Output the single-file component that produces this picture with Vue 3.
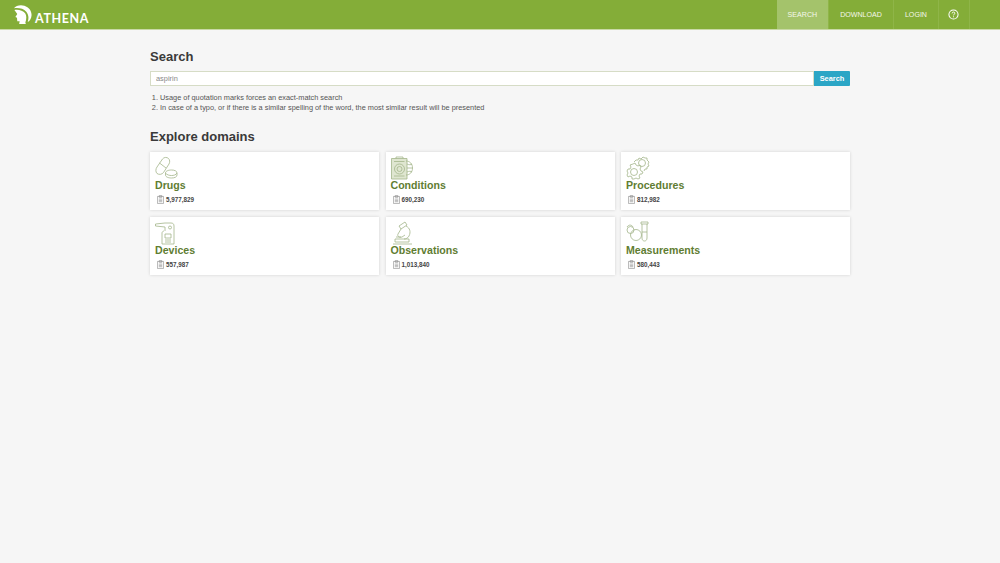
<template>
  <div class="page">
    <header class="topbar">
      <a class="logo">
        <svg class="helmet" viewBox="0 0 20 20">
          <path d="M1 3.500 C3 0.500 8 -0.500 12 0.800 C17 2.500 19.800 6.500 19.500 11 C19.300 14 18 16.500 15.500 18 C16.800 14 16.500 10 14 7 C11 3.800 6 2.800 1 3.500 Z" fill="#fff" />
          <path d="M1.500 5.200 C6 4.500 10.500 5.800 12.800 8.800 C14.500 11.500 14.300 15 13 18.500 L13.500 20 L6.500 20 L7 17 L4.500 17 L4.200 13.500 L2.500 12.500 L4.500 9.500 Z" fill="#fff" />
        </svg>
        <span>ATHENA</span>
      </a>
      <nav class="nav">
        <a class="nav-item active">SEARCH</a>
        <a class="nav-item">DOWNLOAD</a>
        <a class="nav-item">LOGIN</a>
        <a class="nav-item help">
          <svg viewBox="0 0 12 12" width="11" height="11" fill="none" stroke="#fff">
            <circle cx="6" cy="6" r="5" stroke-width="1.100" />
            <path d="M4.500 4.800 C4.500 3.800 5.200 3.300 6 3.300 C6.900 3.300 7.500 3.900 7.500 4.600 C7.500 5.600 6 5.700 6 7" stroke-width="1" />
            <path d="M6 8 V9" stroke-width="1.100" />
          </svg>
        </a>
      </nav>
    </header>

    <main class="content">
      <h2 class="title">Search</h2>
      <form class="search" @submit.prevent>
        <input class="search-input" type="text" v-model="query" />
        <button class="search-btn">Search</button>
      </form>
      <ol class="tips">
        <li>Usage of quotation marks forces an exact-match search</li>
        <li>In case of a typo, or if there is a similar spelling of the word, the most similar result will be presented</li>
      </ol>

      <h2 class="title explore">Explore domains</h2>
      <div class="domains">
        <div class="card" v-for="d in domains" :key="d.name">
          <svg class="card-icon" viewBox="0 0 24 24" width="24" height="24" fill="none" stroke="#a3b58a" stroke-width="0.800">
            <path v-if="d.tint" :d="d.tint" fill="#dfe6d0" />
            <path v-for="(p, i) in d.paths" :key="i" :d="p" />
            <circle v-for="(c, i) in d.circles" :key="'c' + i" :cx="c[0]" :cy="c[1]" :r="c[2]" />
          </svg>
          <div class="card-name">{{ d.name }}</div>
          <div class="card-count">
            <svg viewBox="0 0 8 10" width="7" height="9" fill="none" stroke="#888" stroke-width="0.700">
              <path d="M0.500 1.500 H7.500 V9.500 H0.500 Z M2.500 0.500 H5.500 V2.500 H2.500 Z M2 4.500 H6 M2 6 H6 M2 7.500 H6" />
            </svg>
            <span>{{ d.count }}</span>
          </div>
        </div>
      </div>
    </main>
  </div>
</template>

<script setup>
import { ref } from 'vue'

const query = ref('aspirin')

const domains = [
  {
    name: 'Drugs',
    count: '5,977,829',
    paths: [
      'M2 11 L7.500 3 C9 1 12 1 13.500 2.500 C15 4 15 6 14 8 L8.500 16.500 C7 18.500 4 19 2 17.500 C0.500 16 0.500 13 2 11 Z',
      'M4.500 7 L11 12',
      'M10.500 17 C10.500 15 13.500 14 16.500 14 C19.500 14 22 15 22 17 V19 C22 21 19.500 22 16.500 22 C13.500 22 10.500 21 10.500 19 Z',
      'M10.500 17 C12 19 14.500 19.500 16.500 19.500 C18.500 19.500 21 19 22 17'
    ],
    circles: []
  },
  {
    name: 'Conditions',
    count: '690,230',
    tint: 'M0.500 2.500 H16 V23 H0.500 Z',
    paths: [
      'M5 2.500 V1 H12 V2.500',
      'M3 5.500 H13.500 M3 20 H13.500',
      'M15 5 C19 5 21.500 8 21.500 12 C21.500 16 19 19 15 19',
      'M16 12 H21.500 M16 8 C18 9 20 9 21 8 M16 16 C18 15 20 15 21 16'
    ],
    circles: [[8.500, 13, 5], [8.500, 13, 2.500]]
  },
  {
    name: 'Procedures',
    count: '812,982',
    paths: [
      'M7 8 L9 7 L10 9 L12 10 L14 9 L15 11 L14 13 L15 15 L17 16 L16 18 L14 18 L13 20 L14 22 L12 23 L10 22 L8 23 L6 23 L6 21 L4 20 L2 21 L1 19 L2 17 L1 15 L2 13 L4 13 L5 11 L4 9 Z',
      'M8 6 L10 4 L12 4 L13 2 L15 3 L17 1 L19 2 L21 2 L21 4 L23 6 L22 8 L23 10 L21 11 L21 13 L19 13 L18 15'
    ],
    circles: [[8, 16, 3.500], [16, 7, 3.500]]
  },
  {
    name: 'Devices',
    count: '557,987',
    paths: [
      'M0.500 3 L10 2 H16 C18 2 19 3 19 5 V23 H7 V12 C7 11 8 10 9 10',
      'M0.500 3 V5 L10 6 V10',
      'M10 13 H16 V17 H10 Z',
      'M10 19 H16 M10 21 H16'
    ],
    circles: [[15, 6.500, 1.500]]
  },
  {
    name: 'Observations',
    count: '1,013,840',
    paths: [
      'M8 5 L14 1 L16 4 L10 8 Z',
      'M10 8 L7 13 C6 15 8 17 11 16 L14 14',
      'M15 5 C19 7 20 11 18 15 C17 17 15 18 13 18',
      'M4 18 H18 V21 H4 Z',
      'M2 23 H21',
      'M5 16 H10'
    ],
    circles: []
  },
  {
    name: 'Measurements',
    count: '580,443',
    paths: [
      'M1 6 C3 3 6 4 7 6',
      'M15 1 H22 V3 H15 Z',
      'M16 3 V17 C16 19 17.200 20 18.500 20 C19.800 20 21 19 21 17 V3',
      'M16 11 H21'
    ],
    circles: [[4.500, 9, 3.500], [10, 14, 5.500]]
  }
]
</script>

<style>
html,
body {
  margin: 0;
  background: #f6f6f6;
}
</style>

<style scoped>
.page {
  min-height: 563px;
  background: #f6f6f6;
  font-family: "Liberation Sans", Arial, sans-serif;
  color: #333;
}

.topbar {
  display: flex;
  justify-content: space-between;
  height: 29px;
  background: #84ad38;
  border-bottom: 1px solid #c9d9a6;
}

.logo {
  display: flex;
  align-items: flex-end;
  gap: 3px;
  padding: 5px 0 5px 13px;
  color: #fff;
  font-family: Lato, "Liberation Sans", sans-serif;
  font-size: 12.500px;
  font-weight: 700;
  letter-spacing: 0.600px;
  line-height: 10px;
}

.helmet {
  width: 19px;
  height: 19px;
}

.nav {
  display: flex;
  margin-right: 30px;
}

.nav-item {
  display: flex;
  align-items: center;
  padding: 0 11px;
  font-size: 7.100px;
  color: #f4f7ea;
  border-right: 1px solid #8fb548;
}

.nav-item.active {
  background: #a4c36b;
}

.help {
  padding: 0 10px 0 9px;
}

.help svg {
  flex: none;
}

.content {
  width: 700px;
  margin: 0 auto;
  padding-top: 19px;
}

.title {
  margin: 0;
  font-size: 13px;
  line-height: 16px;
  font-weight: 700;
  color: #3a3a3a;
}

.search {
  display: flex;
  margin-top: 6px;
  height: 15px;
}

.search-input {
  flex: 1;
  min-width: 0;
  box-sizing: border-box;
  height: 15px;
  padding: 0 5px;
  border: 1px solid #d6dcc6;
  background: #fff;
  font-family: inherit;
  font-size: 7.400px;
  color: #888;
  outline: none;
}

.search-btn {
  width: 36px;
  height: 15px;
  padding: 0;
  border: 0;
  border-radius: 0 1px 1px 0;
  background: #2ba6c6;
  color: #fff;
  font-family: inherit;
  font-size: 7.400px;
  font-weight: 700;
}

.tips {
  margin: 7px 0 0;
  padding-left: 10px;
  font-size: 7.370px;
  line-height: 9.500px;
  color: #555;
}

.explore {
  margin-top: 17px;
}

.domains {
  display: grid;
  grid-template-columns: repeat(3, 1fr);
  column-gap: 6.500px;
  row-gap: 7px;
  margin-top: 7px;
}

.card {
  box-sizing: border-box;
  height: 58px;
  padding: 4px 5px;
  background: #fff;
  box-shadow: 0 0 3px rgba(0, 0, 0, 0.15);
}

.card-icon {
  display: block;
}

.card-name {
  font-size: 10.600px;
  line-height: 11px;
  font-weight: 700;
  color: #5f7d32;
}

.card-count {
  display: flex;
  align-items: center;
  gap: 2px;
  margin-top: 4px;
  padding-left: 2px;
  font-size: 6.300px;
  font-weight: 700;
  color: #444;
}
</style>
